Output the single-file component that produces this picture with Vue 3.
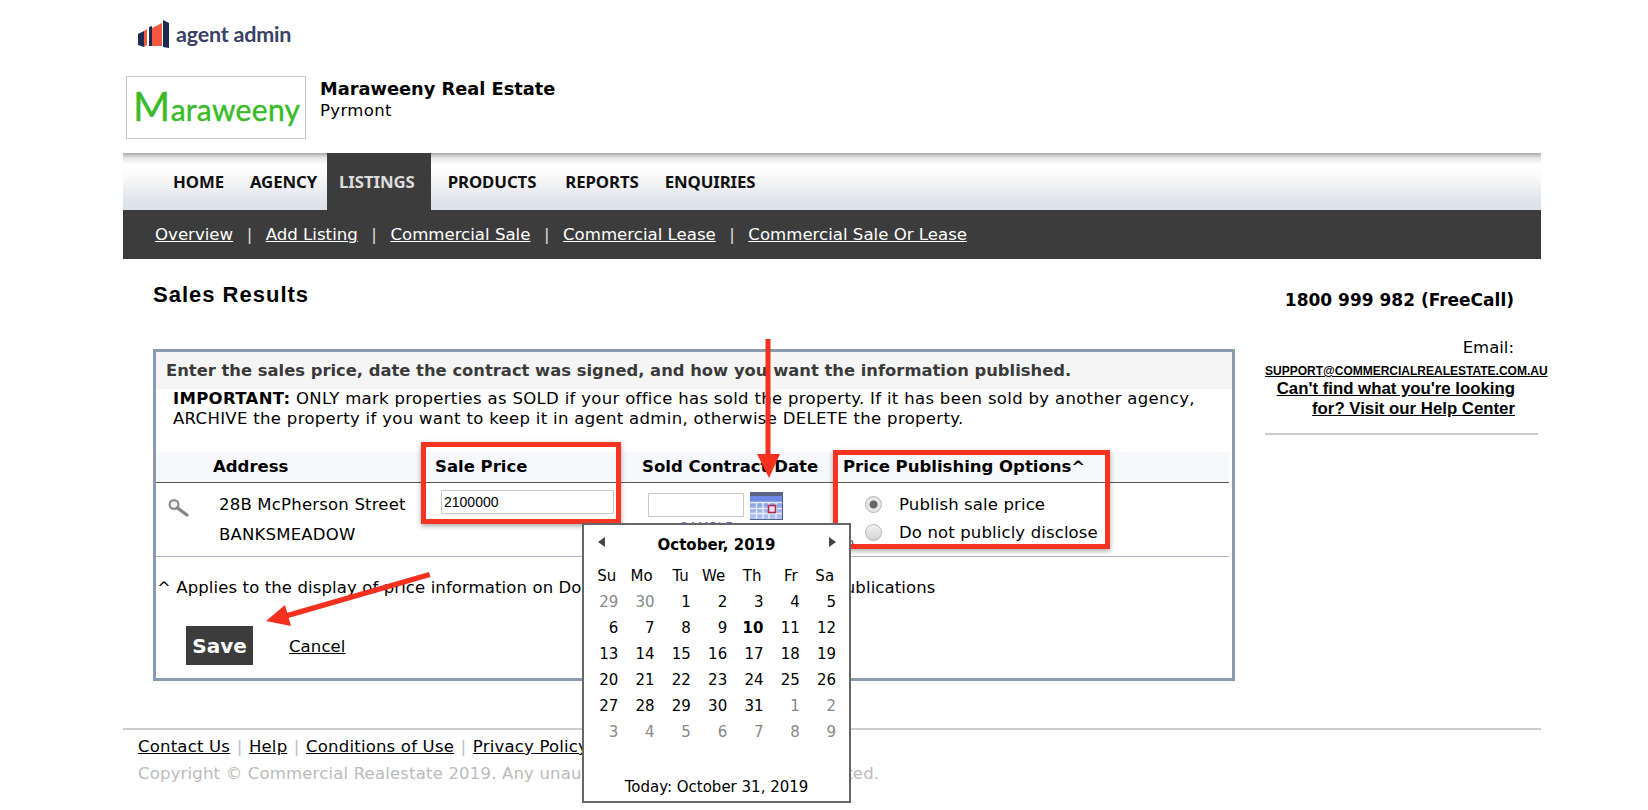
<script setup>
const navItems = ['HOME', 'AGENCY', 'LISTINGS', 'PRODUCTS', 'REPORTS', 'ENQUIRIES']
const subItems = ['Overview', 'Add Listing', 'Commercial Sale', 'Commercial Lease', 'Commercial Sale Or Lease']
const footerItems = ['Contact Us', 'Help', 'Conditions of Use', 'Privacy Policy']
const weekdays = ['Su', 'Mo', 'Tu', 'We', 'Th', 'Fr', 'Sa']
const days = [
  [29, 'o'], [30, 'o'], [1], [2], [3], [4], [5],
  [6], [7], [8], [9], [10, 'b'], [11], [12],
  [13], [14], [15], [16], [17], [18], [19],
  [20], [21], [22], [23], [24], [25], [26],
  [27], [28], [29], [30], [31], [1, 'o'], [2, 'o'],
  [3, 'o'], [4, 'o'], [5, 'o'], [6, 'o'], [7, 'o'], [8, 'o'], [9, 'o']
]
</script>

<template>
  <div class="page">
    <div class="shell">
      <div class="brand">
        <svg class="brand-icon" width="32" height="28" viewBox="0 0 32 28">
          <polygon points="0,14 6,11 6,27 0,25" fill="#1d2a52" />
          <polygon points="6,11 9,9 9,25 6,27" fill="#f4583a" />
          <polygon points="11,7 14,6 14,26 11,26" fill="#1d2a52" />
          <polygon points="14,8 24,3 24,26 14,26" fill="#f4583a" />
          <polygon points="25,0 31,3 31,28 25,27" fill="#1d2a52" />
        </svg>
        <span class="brand-text">agent admin</span>
      </div>

      <div class="agency">
        <div class="agency-logo"><span class="logo-m">M</span>araweeny</div>
        <div class="agency-text">
          <div class="agency-name">Maraweeny Real Estate</div>
          <div class="agency-place">Pyrmont</div>
        </div>
      </div>

      <nav class="nav">
        <a
          v-for="item in navItems"
          :key="item"
          class="nav-item"
          :class="{ first: item === 'HOME', active: item === 'LISTINGS', last: item === 'ENQUIRIES' }"
        >{{ item }}</a>
      </nav>
      <div class="subnav">
        <template v-for="(item, i) in subItems" :key="item">
          <span v-if="i" class="sub-sep">|</span>
          <a class="sub-link">{{ item }}</a>
        </template>
      </div>

      <div class="main">
        <div class="left">
          <h1 class="title">Sales Results</h1>
          <section class="card">
            <div class="band">Enter the sales price, date the contract was signed, and how you want the information published.</div>
            <p class="note"><b>IMPORTANT:</b> ONLY mark properties as SOLD if your office has sold the property. If it has been sold by another agency,<br />ARCHIVE the property if you want to keep it in agent admin, otherwise DELETE the property.</p>

            <div class="thead">
              <span></span>
              <span>Address</span>
              <span>Sale Price</span>
              <span>Sold Contract Date</span>
              <span>Price Publishing Options^</span>
            </div>
            <div class="trow">
              <div class="cell-icon">
                <svg width="24" height="20" viewBox="0 0 24 20">
                  <circle cx="6" cy="6.500" r="4.400" fill="#f4f4f4" stroke="#8a8a8a" stroke-width="2.200" />
                  <line x1="9.500" y1="10" x2="19" y2="17" stroke="#858585" stroke-width="3.200" stroke-linecap="round" />
                </svg>
              </div>
              <div class="cell-address">28B McPherson Street<br />BANKSMEADOW</div>
              <div class="cell-price"><input class="price-input" value="2100000" /></div>
              <div class="cell-date">
                <div class="date-line">
                  <input class="date-input" />
                  <svg class="cal-icon" width="33" height="28" viewBox="0 0 33 28">
                    <defs>
                      <linearGradient id="calgrad" x1="0" y1="0" x2="0" y2="1">
                        <stop offset="0" stop-color="#6f8ae6" />
                        <stop offset="1" stop-color="#b5c6f2" />
                      </linearGradient>
                    </defs>
                    <rect x="0" y="0" width="33" height="28" fill="url(#calgrad)" />
                    <rect x="0" y="0" width="33" height="4" fill="#5a6484" />
                    <rect x="0" y="4" width="33" height="6" fill="#6f8ae6" />
                    <path d="M0 10.500H33M0 16.500H33M0 21.500H33M6.500 10V27M13 10V27M19 10V27M26 10V27" stroke="#e8eeff" stroke-width="1.400" fill="none" />
                    <rect x="18.500" y="13.500" width="7" height="7" fill="#dfe4f6" stroke="#b52a46" stroke-width="1.600" />
                    <path d="M0 27.500H33M32.500 4V28" stroke="#53628e" stroke-width="1" fill="none" />
                  </svg>
                </div>
                <div class="date-hint">SAMPLE</div>
                <div class="date-note">Click calendar icon to pop-up</div>
              </div>
              <div class="cell-options">
                <label class="opt"><input class="radio" type="radio" name="pub" checked /><span>Publish sale price</span></label>
                <label class="opt"><input class="radio" type="radio" name="pub" /><span>Do not publicly disclose</span></label>
              </div>
            </div>
            <p class="footnote">^ Applies to the display of price information on Domain and other commercial e-publications</p>
            <div class="actions">
              <button class="save">Save</button>
              <a class="cancel">Cancel</a>
            </div>
          </section>
        </div>

        <aside class="side">
          <div class="phone">1800 999 982 (FreeCall)</div>
          <div class="email-label">Email:</div>
          <a class="email">SUPPORT@COMMERCIALREALESTATE.COM.AU</a>
          <a class="help">Can't find what you're looking<br />for? Visit our Help Center</a>
          <div class="side-rule"></div>
        </aside>
      </div>

      <footer class="footer">
        <div class="foot-links">
          <template v-for="(item, i) in footerItems" :key="item">
            <span v-if="i" class="foot-sep">|</span>
            <a class="foot-link">{{ item }}</a>
          </template>
        </div>
        <div class="copy">Copyright © Commercial Realestate 2019. Any unauthorised reproduction is prohibited.</div>
      </footer>
    </div>

    <div class="mark mark-price"></div>
    <div class="mark mark-options"></div>

    <div class="calendar">
      <div class="cal-head">
        <span class="cal-prev"></span>
        <span class="cal-title">October, 2019</span>
        <span class="cal-next"></span>
      </div>
      <div class="cal-grid">
        <span v-for="d in weekdays" :key="d" class="cal-wd">{{ d }}</span>
        <span
          v-for="(d, i) in days"
          :key="i"
          class="cal-day"
          :class="{ other: d[1] === 'o', today: d[1] === 'b' }"
        >{{ d[0] }}</span>
      </div>
      <div class="cal-today">Today: October 31, 2019</div>
    </div>

    <svg class="arrows" width="1648" height="810" viewBox="0 0 1648 810">
      <g fill="#f5301f" stroke="none">
        <rect x="765.500" y="339" width="5" height="118" />
        <polygon points="757,454 780,454 769,478" />
        <polygon points="429,572 430.500,577 285,619 283,614" />
        <polygon points="266,621 285,605 291,626" />
      </g>
    </svg>
  </div>
</template>

<style>
html, body { margin: 0; background: #fff; }
</style>

<style scoped>
.page {
  position: relative;
  width: 1648px;
  height: 810px;
  overflow: hidden;
  background: #fff;
  color: #000;
  font-family: "DejaVu Sans", Verdana, sans-serif;
  font-size: 16.500px;
  letter-spacing: 0.2px;
}
.shell { width: 1418px; margin-left: 123px; }

.brand { display: flex; align-items: center; gap: 6px; height: 30px; padding: 19px 0 0 15px; }
.brand-text { font-family: Lato, sans-serif; font-size: 21.500px; font-weight: 700; color: #3a4066; letter-spacing: -0.2px; }

.agency { display: flex; margin-top: 27px; height: 63px; padding-left: 3px; }
.agency-logo {
  box-sizing: border-box;
  width: 180px;
  height: 63px;
  border: 1px solid #c8c8c8;
  color: #3abb28;
  font-family: Lato, sans-serif;
  font-size: 30px;
  line-height: 58px;
  padding-left: 6px;
  letter-spacing: 0.3px;
  -webkit-text-stroke: 0.4px #3abb28;
  white-space: nowrap;
  overflow: hidden;
}
.logo-m { font-size: 40px; letter-spacing: 0.5px; }
.agency-text { margin-left: 14px; padding-top: 1px; }
.agency-name { font-weight: 700; font-size: 17.800px; line-height: 24px; letter-spacing: 0; }
.agency-place { line-height: 20px; letter-spacing: 0.35px; }

.nav {
  display: flex;
  gap: 29px;
  height: 57px;
  margin-top: 14px;
  padding-left: 50px;
  background: linear-gradient(#a8a8a8 0, #e8e8e8 5px, #fff 12px, #f8f8f8 24px, #dde1ea 52px, #dde1ea 57px);
}
.nav-item {
  font-family: "Noto Sans", sans-serif;
  font-weight: 700;
  font-size: 16.800px;
  line-height: 58px;
  letter-spacing: -0.1px;
  color: #111;
}
.nav-item.first { margin-right: -3px; }
.nav-item.active { background: #3c3c3c; color: #ddd; padding: 0 16px 0 12px; margin: 0 -12px 0 -19px; }
.nav-item.last { margin-left: -3px; }
.subnav {
  display: flex;
  align-items: center;
  height: 49px;
  padding-left: 32px;
  background: #3c3c3c;
  color: #fff;
  font-size: 16.600px;
  letter-spacing: 0;
}
.sub-link { text-decoration: underline; }
.sub-sep { margin: 0 13.500px; color: #ddd; }

.main { display: flex; }
.left { flex: none; width: 1082px; margin-left: 30px; }
.title { margin: 23px 0 41px; font: 700 22px/26px "Liberation Sans", Arial, sans-serif; letter-spacing: 1px; }
.card { box-sizing: border-box; height: 332px; border: 3px solid #8a9bb0; }
.band {
  height: 37px;
  padding-left: 10px;
  background: #f5f5f6;
  color: #3a3a3a;
  font-weight: 700;
  font-size: 16.370px;
  letter-spacing: 0;
  line-height: 37px;
  white-space: nowrap;
}
.note { margin: 0 0 23px; padding-left: 17px; line-height: 20px; letter-spacing: 0.32px; white-space: nowrap; }

.thead, .trow {
  display: grid;
  grid-template-columns: 57px 222px 207px 201px 386px;
  width: 1073px;
}
.thead {
  height: 30px;
  background: #f7f8fb;
  border-bottom: 1px solid #555;
  font-weight: 700;
  font-size: 16.500px;
  letter-spacing: 0;
  line-height: 30px;
}
.trow { height: 73px; border-bottom: 1px solid #aab4c4; position: relative; }
.cell-icon { padding: 15px 0 0 12px; }
.cell-address { padding: 7px 0 0 6px; line-height: 30px; }
.cell-price { padding: 7px 0 0 6px; }
.price-input, .date-input {
  box-sizing: border-box;
  border: 1px solid #c8c8c8;
  background: #fff;
  font: 14px "Liberation Sans", Arial, sans-serif;
  padding: 0 2px;
  outline: none;
}
.price-input { width: 173px; height: 24px; }
.date-input { flex: none; width: 96px; height: 24px; margin-top: 1px; }
.cell-date { padding: 9px 0 0 6px; }
.date-line { display: flex; align-items: flex-start; gap: 6px; height: 28px; }
.date-hint { color: #5a70d8; font-size: 12px; line-height: 12px; margin: 1px 0 0 32px; letter-spacing: 1px; }
.date-note { display: flex; justify-content: flex-end; width: 206px; margin-top: 3px; font-size: 12px; line-height: 14px; white-space: nowrap; letter-spacing: 0; color: #333; }
.cell-options { padding: 7px 0 0 22px; letter-spacing: 0.13px; }
.opt { display: flex; align-items: center; height: 28px; white-space: nowrap; }
.radio {
  appearance: none;
  box-sizing: border-box;
  flex: none;
  width: 17px;
  height: 17px;
  margin: 0 17px 0 0;
  border: 1px solid #b4b4b4;
  border-radius: 50%;
  background: linear-gradient(#f2f2f2, #d4d4d4);
}
.radio:checked {
  background: radial-gradient(circle, #666 0, #666 3.600px, #e6e6e6 4.400px);
}

.footnote { margin: 21px 0 0; line-height: 20px; padding-left: 1px; white-space: nowrap; letter-spacing: 0.11px; }
.actions { display: flex; align-items: center; margin: 28px 0 0 30px; }
.save {
  width: 67px;
  height: 39px;
  padding: 0;
  border: 0;
  background: #3c3c3c;
  color: #fff;
  font: 700 20px "DejaVu Sans", sans-serif;
}
.cancel { margin-left: 36px; padding-top: 2px; text-decoration: underline; letter-spacing: 0.1px; }

.side { flex: none; width: 282px; margin-left: 30px; box-sizing: border-box; padding-top: 29px; text-align: right; }
.phone { font-weight: 700; font-size: 17px; letter-spacing: 0; line-height: 24px; padding-right: 33px; }
.email-label { margin-top: 24px; line-height: 24px; padding-right: 33px; letter-spacing: 0; }
.email { display: block; margin-top: 3px; font: 700 12px/16px "Liberation Sans", Arial, sans-serif; text-decoration: underline; text-align: left; letter-spacing: 0; white-space: nowrap; }
.help { display: block; font: 700 16.800px/20px "Liberation Sans", Arial, sans-serif; text-decoration: underline; padding-right: 32px; letter-spacing: 0; }
.side-rule { width: 273px; height: 2px; margin-top: 14px; background: #ccc; }

.footer { margin-top: 47px; border-top: 2px solid #ccc; padding: 6px 0 0 15px; }
.foot-links { line-height: 22px; white-space: nowrap; }
.foot-link { text-decoration: underline; }
.foot-sep { margin: 0 6.500px; color: #b8c0cc; }
.copy { margin-top: 5px; line-height: 22px; color: #bbb; white-space: nowrap; letter-spacing: 0.18px; }

.mark { position: absolute; box-sizing: border-box; border: 5px solid #f53424; box-shadow: 0 2px 5px rgba(0, 0, 0, 0.35); }
.mark-price { left: 421px; top: 442px; width: 200px; height: 82px; }
.mark-options { left: 833px; top: 450px; width: 277px; height: 99px; }

.calendar {
  position: absolute;
  left: 582px;
  top: 523px;
  box-sizing: border-box;
  width: 269px;
  height: 280px;
  border: 2px solid #666;
  background: #fff;
  font-size: 15px;
  letter-spacing: 0;
}
.cal-head { position: relative; height: 38px; text-align: center; }
.cal-title { display: block; padding-top: 8px; line-height: 24px; font-weight: 700; }
.cal-prev, .cal-next { position: absolute; top: 12px; width: 0; height: 0; border-style: solid; border-width: 5px 0 5px 7px; border-color: transparent transparent transparent #444; }
.cal-prev { left: 14px; transform: scaleX(-1); }
.cal-next { right: 13px; }
.cal-grid { display: grid; grid-template-columns: repeat(7, 36.300px); grid-auto-rows: 26px; line-height: 26px; margin-left: -2px; text-align: right; }
.cal-wd { padding-right: 2px; }
.cal-day.other { color: #888; }
.cal-day.today { font-weight: 700; }
.cal-today { position: absolute; left: 0; right: 0; bottom: 2px; line-height: 24px; text-align: center; }

.arrows { position: absolute; left: 0; top: 0; pointer-events: none; }
</style>
